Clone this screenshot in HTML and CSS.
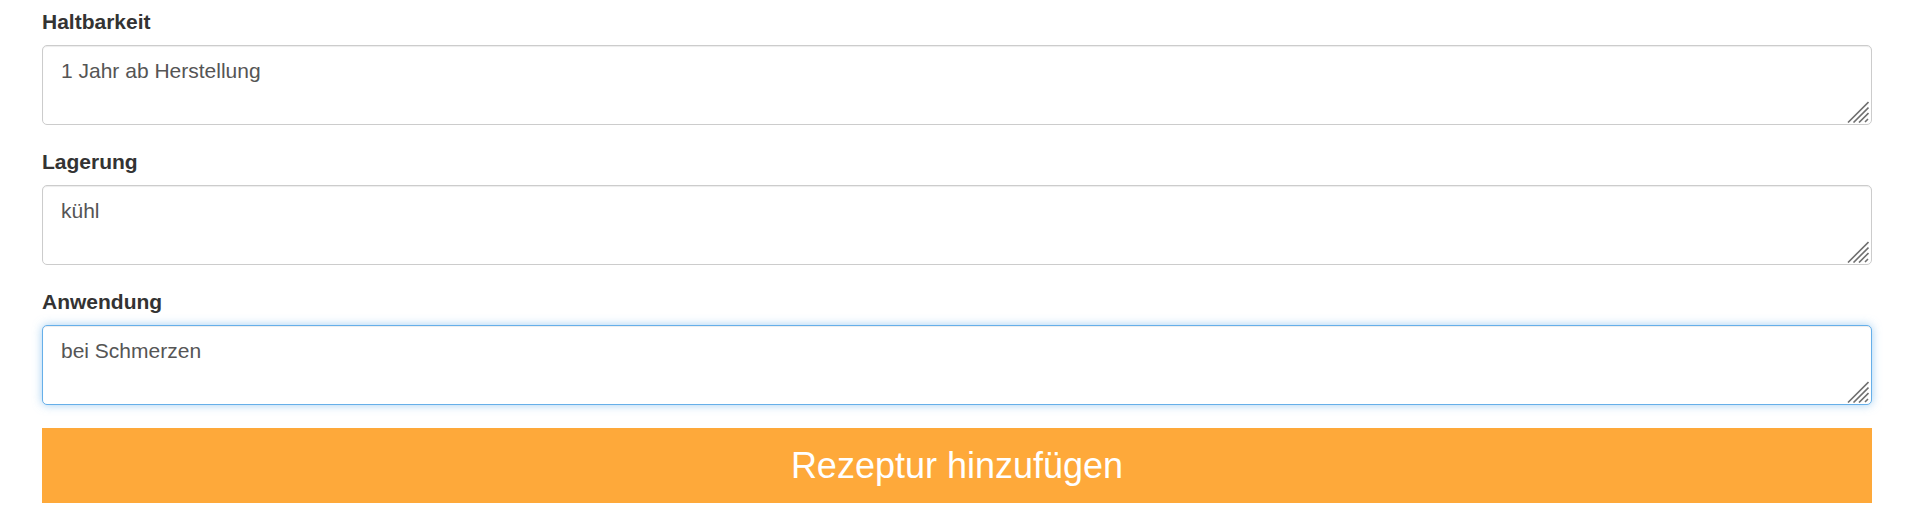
FILE: index.html
```html
<!DOCTYPE html>
<html lang="de">
<head>
<meta charset="utf-8">
<title>Rezeptur</title>
<link rel="stylesheet" href="styles.css">
</head>
<body>
<form class="recipe-form">
  <div class="form-group">
    <label class="form-label" for="haltbarkeit">Haltbarkeit</label>
    <div class="field">
      <textarea class="form-control" id="haltbarkeit">1 Jahr ab Herstellung</textarea>
      <svg class="grip" width="22" height="22" viewBox="0 0 22 22" aria-hidden="true"><path d="M1 21.5L21.5 1M6.5 21.5L21.5 6.5M12 21.5L21.5 12M18 21L21 18"/></svg>
    </div>
  </div>
  <div class="form-group">
    <label class="form-label" for="lagerung">Lagerung</label>
    <div class="field">
      <textarea class="form-control" id="lagerung">kühl</textarea>
      <svg class="grip" width="22" height="22" viewBox="0 0 22 22" aria-hidden="true"><path d="M1 21.5L21.5 1M6.5 21.5L21.5 6.5M12 21.5L21.5 12M18 21L21 18"/></svg>
    </div>
  </div>
  <div class="form-group">
    <label class="form-label" for="anwendung">Anwendung</label>
    <div class="field">
      <textarea class="form-control is-focused" id="anwendung">bei Schmerzen</textarea>
      <svg class="grip" width="22" height="22" viewBox="0 0 22 22" aria-hidden="true"><path d="M1 21.5L21.5 1M6.5 21.5L21.5 6.5M12 21.5L21.5 12M18 21L21 18"/></svg>
    </div>
  </div>
  <button type="button" class="btn-submit">Rezeptur hinzufügen</button>
</form>
<script src="script.js"></script>
</body>
</html>
```

FILE: styles.css
```css
html, body {
  margin: 0;
  padding: 0;
  background: #fff;
}

body {
  font-family: "Liberation Sans", Arial, sans-serif;
  color: #333;
}

.recipe-form {
  display: flex;
  flex-direction: column;
  padding: 7px 45px 0 42px;
}

.form-group {
  display: flex;
  flex-direction: column;
  margin-bottom: 22px;
}

.form-label {
  font-size: 21px;
  line-height: 28px;
  font-weight: bold;
  color: #333;
  margin: 1px 0 9px;
}

.field {
  position: relative;
  display: flex;
}

.form-control {
  box-sizing: border-box;
  width: 100%;
  height: 80px;
  margin: 0;
  padding: 11px 18px;
  font-family: "Liberation Sans", Arial, sans-serif;
  font-size: 21px;
  line-height: 28px;
  color: #555;
  background: #fff;
  border: 1px solid #ccc;
  border-radius: 5px;
  box-shadow: inset 0 1px 1px rgba(0, 0, 0, 0.075);
  outline: none;
  resize: none;
  caret-color: #333;
}

.form-control.is-focused,
.form-control:focus {
  border-color: #66afe9;
  box-shadow: inset 0 1px 1px rgba(0, 0, 0, 0.075), 0 0 10px rgba(102, 175, 233, 0.6);
}

.grip {
  position: absolute;
  right: 3px;
  bottom: 2px;
  pointer-events: none;
}

.grip path {
  fill: none;
  stroke: #707070;
  stroke-width: 1.6;
}

.btn-submit {
  margin-top: 1px;
  height: 75px;
  width: 100%;
  border: none;
  border-radius: 0;
  background: #fea93a;
  color: #fff;
  font-family: "Liberation Sans", Arial, sans-serif;
  font-size: 36px;
  line-height: 1;
  cursor: pointer;
}
```

FILE: script.js
```js
var el = document.getElementById('anwendung');
el.focus();
el.setSelectionRange(el.value.length, el.value.length);
```
